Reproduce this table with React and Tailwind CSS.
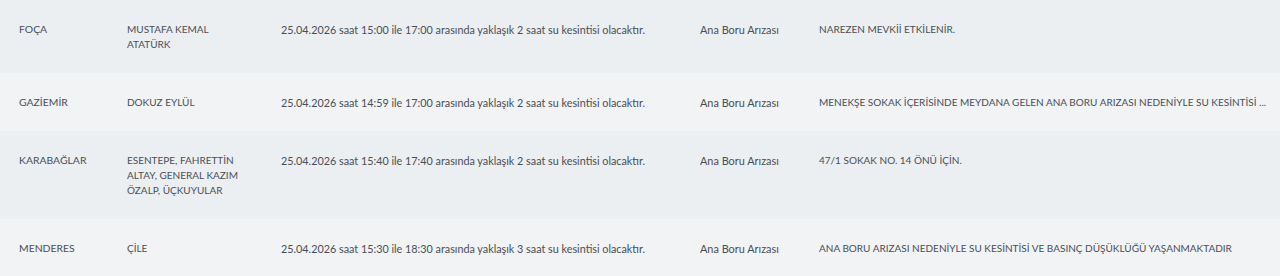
import React from "react";

const rows = [
  {
    district: "FOÇA",
    area: "MUSTAFA KEMAL ATATÜRK",
    info: "25.04.2026 saat 15:00 ile 17:00 arasında yaklaşık 2 saat su kesintisi olacaktır.",
    type: "Ana Boru Arızası",
    note: "NAREZEN MEVKİİ ETKİLENİR.",
  },
  {
    district: "GAZİEMİR",
    area: "DOKUZ EYLÜL",
    info: "25.04.2026 saat 14:59 ile 17:00 arasında yaklaşık 2 saat su kesintisi olacaktır.",
    type: "Ana Boru Arızası",
    note: "MENEKŞE SOKAK İÇERİSİNDE MEYDANA GELEN ANA BORU ARIZASI NEDENİYLE SU KESİNTİSİ ...",
  },
  {
    district: "KARABAĞLAR",
    area: "ESENTEPE, FAHRETTİN ALTAY, GENERAL KAZIM ÖZALP, ÜÇKUYULAR",
    info: "25.04.2026 saat 15:40 ile 17:40 arasında yaklaşık 2 saat su kesintisi olacaktır.",
    type: "Ana Boru Arızası",
    note: "47/1 SOKAK NO. 14 ÖNÜ İÇİN.",
  },
  {
    district: "MENDERES",
    area: "ÇİLE",
    info: "25.04.2026 saat 15:30 ile 18:30 arasında yaklaşık 3 saat su kesintisi olacaktır.",
    type: "Ana Boru Arızası",
    note: "ANA BORU ARIZASI NEDENİYLE SU KESİNTİSİ VE BASINÇ DÜŞÜKLÜĞÜ YAŞANMAKTADIR",
  },
];

const App = () => {
  return (
    <div className="w-[1280px] h-[276px] overflow-hidden bg-[#f0f2f5] text-[10px] leading-[15px] text-[#4a4e55] font-['Lato',sans-serif]">
      {rows.map((r, i) => (
        <div
          key={r.district}
          className={`grid grid-cols-[108px_154px_419px_119px_480px] pt-[22px] pb-[21px] ${i % 2 === 0 ? "bg-[#eceff2]" : "bg-[#f1f3f5]"}`}
        >
          <div className="pl-[19px] pr-[12px] text-[10.4px]">{r.district}</div>
          <div className="pl-[19px] pr-[16px]">{r.area}</div>
          <div className="pl-[19px] text-[10.8px]">{r.info}</div>
          <div className="pl-[19px] text-[10.9px]">{r.type}</div>
          <div className="pl-[19px] pr-[20px] whitespace-nowrap overflow-hidden">{r.note}</div>
        </div>
      ))}
    </div>
  );
};

export default App;
